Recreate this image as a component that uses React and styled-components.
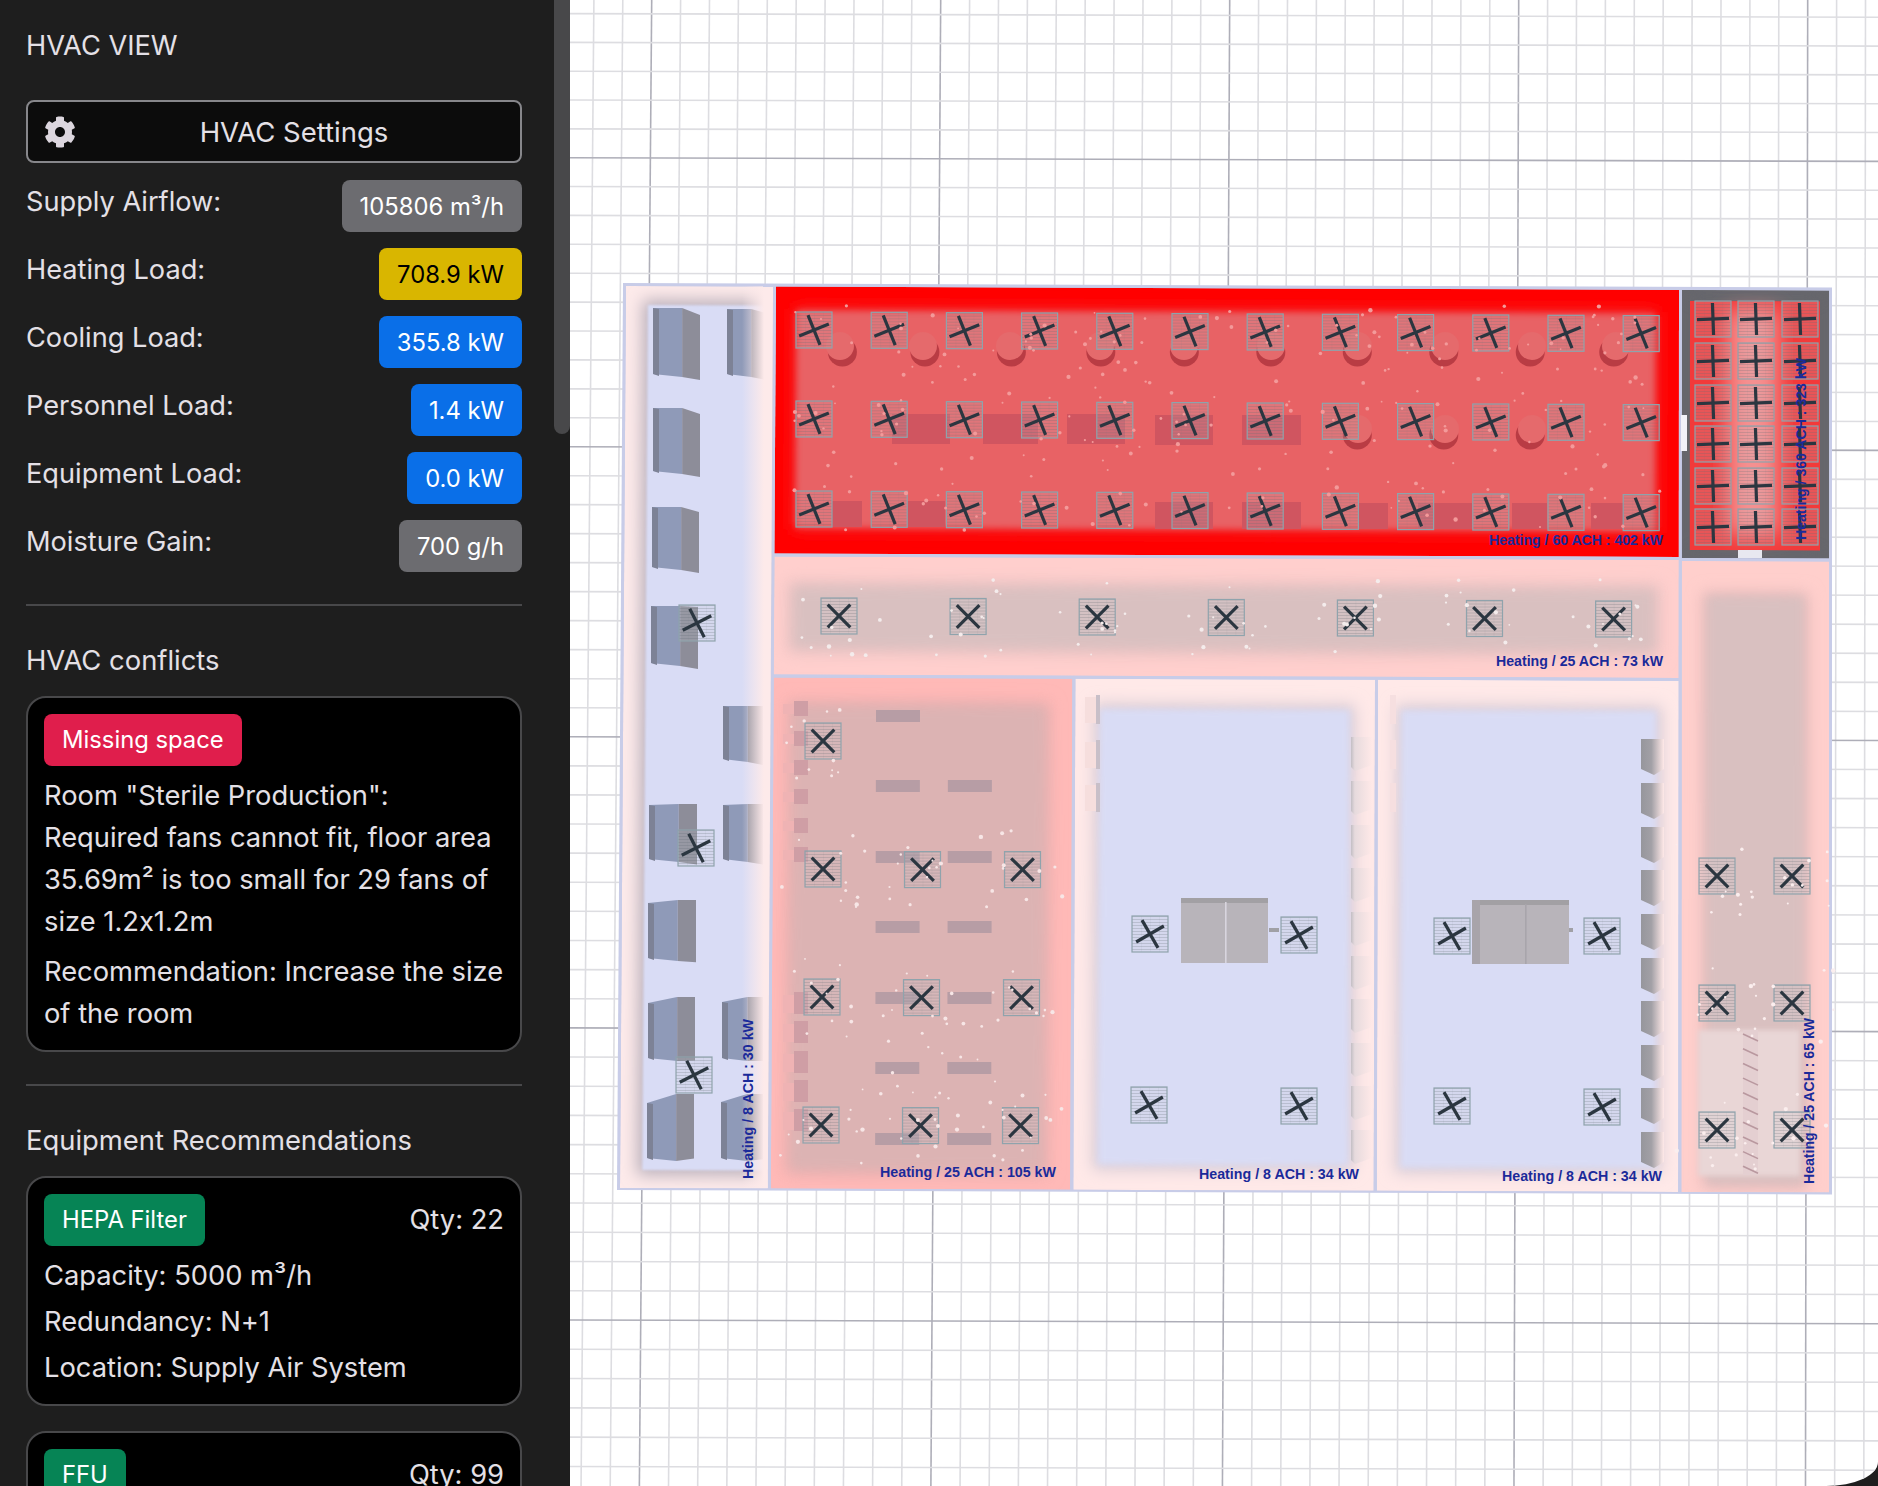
import React from 'react';
import styled, { createGlobalStyle } from 'styled-components';
import { FaCog } from 'react-icons/fa';

const GlobalStyle = createGlobalStyle`
  html, body, #root {
    margin: 0;
    height: 100%;
    background: #1e1e1e;
  }
`;

const Page = styled.div`
  display: flex;
  width: 100%;
  height: 100vh;
  overflow: hidden;
  font-family: Inter, 'Liberation Sans', sans-serif;
  font-feature-settings: 'calt' 0;
`;

const Sidebar = styled.aside`
  position: relative;
  flex: 0 0 570px;
  box-sizing: border-box;
  height: 100%;
  padding: 25px 48px 0 26px;
  overflow: hidden;
  background: #1e1e1e;
  color: #e4e0e6;
`;

const ScrollThumb = styled.div`
  position: absolute;
  top: 0;
  right: 0;
  width: 16px;
  height: 434px;
  border-radius: 0 0 8px 8px;
  background: #48484a;
`;

const Title = styled.div`
  font-size: 27.2px;
  line-height: 42px;
  margin-bottom: 33px;
`;

const SettingsButton = styled.button`
  display: flex;
  align-items: center;
  box-sizing: border-box;
  width: 100%;
  height: 63px;
  padding: 0 8px 0 16px;
  margin-bottom: 17px;
  border: 2px solid #87878b;
  border-radius: 8px;
  background: #0c0c0c;
  color: #e4e0e6;
  font: inherit;
  font-size: 27.5px;

  span {
    flex: 1;
    text-align: center;
  }
`;

const StatList = styled.div`
  display: flex;
  flex-direction: column;
  gap: 16px;
`;

const StatRow = styled.div`
  display: flex;
  justify-content: space-between;
  align-items: flex-start;
  height: 52px;
  font-size: 27.2px;
  line-height: 44px;
`;

const toneColors = {
  gray: ['#6c6c70', '#ffffff'],
  yellow: ['#d9b600', '#000000'],
  blue: ['#0a6fe8', '#ffffff'],
  red: ['#e01e4c', '#ffffff'],
  green: ['#068455', '#ffffff'],
};

const StatBadge = styled.div`
  box-sizing: border-box;
  height: 52px;
  padding: 0 18px;
  border-radius: 8px;
  background: ${(p) => toneColors[p.$tone][0]};
  color: ${(p) => toneColors[p.$tone][1]};
  font-size: 23.8px;
  line-height: 53px;
`;

const Divider = styled.hr`
  height: 2px;
  margin: 32px 0 33px;
  border: 0;
  background: #48484a;
`;

const Heading = styled.div`
  font-size: 27.4px;
  line-height: 42px;
  margin-bottom: 15px;
`;

const Card = styled.div`
  box-sizing: border-box;
  padding: 16px 16px 15px 16px;
  margin-bottom: 25px;
  border: 2px solid #48484a;
  border-radius: 20px;
  background: #000000;
  font-size: 27.3px;
  line-height: 42px;

  p {
    margin: 0 0 8px;
  }
  p:last-child {
    margin-bottom: 0;
  }
`;

const CardTop = styled.div`
  display: flex;
  justify-content: space-between;
  align-items: center;
  margin-bottom: 9px;
`;

const Tag = styled.div`
  height: 52px;
  padding: 0 18px;
  border-radius: 8px;
  background: ${(p) => toneColors[p.$tone][0]};
  color: #ffffff;
  font-size: 23.8px;
  line-height: 52px;
`;

const Spec = styled.div`
  margin-bottom: 4px;

  &:last-child {
    margin-bottom: 0;
  }
`;

const Canvas = styled.main`
  flex: 1;
  min-width: 0;
  height: 100%;
  overflow: hidden;
  background: #ffffff;
  border-bottom-right-radius: 52px 24px;

  svg {
    display: block;
    width: 100%;
    height: 100%;
  }
`;

const stats = [
  ['Supply Airflow:', '105806 m³/h', 'gray'],
  ['Heating Load:', '708.9 kW', 'yellow'],
  ['Cooling Load:', '355.8 kW', 'blue'],
  ['Personnel Load:', '1.4 kW', 'blue'],
  ['Equipment Load:', '0.0 kW', 'blue'],
  ['Moisture Gain:', '700 g/h', 'gray'],
];

// the floor plan is very slightly skewed, plan() maps flat plan coords to the screen
const plan = (u, v) => [
  u - 6 * (1 - (u - 623) / 1209) * ((v - 283) / 907),
  v + (4.5 * (u - 623)) / 1209,
];

const quad = ([u0, v0, u1, v1]) =>
  [[u0, v0], [u1, v0], [u1, v1], [u0, v1]]
    .map(([u, v]) => plan(u, v).map((n) => n.toFixed(1)).join(','))
    .join(' ');

const grow = ([u0, v0, u1, v1], d) => [u0 - d, v0 - d, u1 + d, v1 + d];

const range = (n) => Array.from({ length: n }, (_, i) => i);

const rooms = [
  { id: 'store', box: [626, 286, 773, 1188], outer: '#fdeaea', shade: '#b9b0bb', inner: '#d9dcf5', floor: [648, 305, 773, 1170], blur: 1, spread: 5 },
  { id: 'sterile', box: [776, 286, 1679, 553], outer: '#ff0000', shade: '#f32c2e', inner: '#e86265', floor: [797, 310, 1655, 527], blur: 3, spread: 2 },
  { id: 'clean', box: [1682, 286, 1829, 554], outer: '#66666c', shade: '#66666c', inner: '#f23a3a', floor: [1690, 297, 1820, 546], blur: 0.5, spread: 0 },
  { id: 'corridor', box: [776, 556, 1679, 674], outer: '#ffcfcd', shade: '#ecc4c4', inner: '#d9c0c0', floor: [795, 586, 1655, 647], blur: 6, spread: 6 },
  { id: 'east', box: [1682, 557, 1829, 1188], outer: '#ffcfcc', shade: '#e6bcbc', inner: '#d9c0c0', floor: [1707, 592, 1804, 1180], blur: 5, spread: 4 },
  { id: 'roomA', box: [776, 677, 1074, 1188], outer: '#ffb9b7', shade: '#eeb0b0', inner: '#dcb3b3', floor: [794, 704, 1048, 1170], blur: 6, spread: 4 },
  { id: 'roomB', box: [1077, 677, 1376, 1188], outer: '#ffe9e8', shade: '#d8ccd6', inner: '#d9dcf5', floor: [1101, 707, 1351, 1163], blur: 3, spread: 5 },
  { id: 'roomC', box: [1379, 677, 1679, 1188], outer: '#ffe9e8', shade: '#d8ccd6', inner: '#d9dcf5', floor: [1402, 707, 1657, 1165], blur: 3, spread: 5 },
];

const sterileFans = [330, 419, 509].flatMap((y) =>
  range(12).map((i) => ({ x: 814 + 75.2 * i, y: y + 0.33 * i, rot: -22 }))
);
const corridorFans = range(7).map((i) => ({ x: 839 + 129.1 * i, y: 616 + 0.5 * i, rot: 45 }));
const roomAFans = [
  { x: 823, y: 741, rot: 45 },
  ...[[869, 823], [997, 822], [1125, 821]].flatMap(([y, x]) =>
    [0, 99.5, 199.5].map((dx) => ({ x: x + dx, y: y + (dx > 0 ? 0.6 : 0), rot: 45 }))
  ),
];
const eastFans = [876, 1003, 1130].flatMap((y) => [
  { x: 1717, y, rot: 45 },
  { x: 1792, y, rot: 45 },
]);

const fans = [
  ...sterileFans,
  ...corridorFans,
  ...roomAFans,
  ...eastFans,
  { x: 697, y: 623, rot: -27 },
  { x: 696, y: 848, rot: -27 },
  { x: 694, y: 1075, rot: -27 },
  { x: 1150, y: 934, rot: -30 },
  { x: 1299, y: 935, rot: -30 },
  { x: 1149, y: 1105, rot: -30 },
  { x: 1299, y: 1106, rot: -30 },
  { x: 1452, y: 936, rot: -30 },
  { x: 1602, y: 936, rot: -30 },
  { x: 1452, y: 1106, rot: -30 },
  { x: 1602, y: 1107, rot: -30 },
  ...[319, 361, 403, 444, 486, 527].flatMap((y) =>
    [1713, 1756, 1800].map((x) => ({ x, y, rot: -2 }))
  ),
];

const moons = [
  ...[840, 923, 1010, 1100, 1184, 1271, 1358, 1445, 1532, 1616].map((x) => [x, 346]),
  ...[1358, 1445, 1532].map((x) => [x, 429]),
];

const redBlocks = [
  [892, 414, 58, 30], [983, 414, 55, 30], [1067, 414, 58, 30], [1155, 415, 58, 30], [1242, 415, 59, 30],
  [832, 501, 30, 26], [907, 501, 38, 26], [1155, 502, 58, 27], [1242, 502, 59, 27], [1358, 503, 30, 26],
  [1418, 503, 54, 26], [1512, 503, 35, 26], [1591, 503, 33, 26],
];

const storeBoxes = [
  [653, 308, 47, 72, 7], [653, 408, 47, 69, 6], [652, 507, 47, 66, 5], [651, 606, 47, 63, 1],
  [649, 804, 48, 61, -1], [648, 900, 48, 64, -3], [648, 997, 47, 67, -6], [647, 1094, 47, 70, -9],
  [727, 309, 39, 71, 4], [723, 706, 40, 59, 0], [723, 804, 40, 61, -1], [722, 997, 41, 67, -5], [721, 1094, 42, 70, -8],
];

const roomABars = [[710], [780, 1], [851, 1], [921, 1], [992, 1], [1062, 1], [1133, 1]];
const roomAStubs = [701, 731, 760, 789, 818, 847, 992, 1021, 1051, 1080, 1109];
const fins = [739, 783, 827, 870, 914, 958, 1001, 1045, 1088, 1132];

const labels = [
  { text: 'Heating / 60 ACH : 402 kW', x: 1489, y: 545, len: 174 },
  { text: 'Heating / 25 ACH : 73 kW', x: 1496, y: 666, len: 167 },
  { text: 'Heating / 25 ACH : 105 kW', x: 880, y: 1177, len: 176 },
  { text: 'Heating / 8 ACH : 34 kW', x: 1199, y: 1179, len: 160 },
  { text: 'Heating / 8 ACH : 34 kW', x: 1502, y: 1181, len: 160 },
  { text: 'Heating / 8 ACH : 30 kW', x: 753, y: 1179, len: 160, up: true },
  { text: 'Heating / 25 ACH : 65 kW', x: 1814, y: 1184, len: 166, up: true },
  { text: 'Heating / 360 ACH : 323 kW', x: 1806, y: 540, len: 182, up: true },
];

// small seeded generator so the particles stay put between renders
const seeded = (seed) => {
  let s = seed;
  return () => {
    s = (s * 16807) % 2147483647;
    return (s % 10000) / 10000;
  };
};

const scatter = (seed, n, [x0, y0, x1, y1], color) => {
  const next = seeded(seed);
  return range(n).map(() => ({
    x: x0 + next() * (x1 - x0),
    y: y0 + next() * (y1 - y0),
    r: 0.9 + next() * 1.3,
    color,
  }));
};

// particles gather round the fans in the rooms with a lot of air change
const aroundFans = (seed, list, perFan, color) =>
  list.flatMap((f, i) =>
    scatter(seed + i * 97, perFan, [f.x - 42, f.y - 40, f.x + 42, f.y + 40], color)
  );

const dots = [
  ...scatter(11, 230, [790, 305, 1660, 530], '#f39a9a'),
  ...aroundFans(23, corridorFans, 11, '#f4ecec'),
  ...aroundFans(37, roomAFans, 11, '#f7e6e6'),
  ...scatter(59, 14, [870, 1030, 1040, 1165], '#f7e6e6'),
  ...aroundFans(41, eastFans, 9, '#fbeeee'),
];

const Grid = () => {
  const lines = [];
  range(47).forEach((n) => {
    const i = n - 4;
    const x0 = 651.7 + 28.9 * i;
    const x1 = x0 + (-0.0083 + (x0 - 652) * 5.9e-6) * 1486;
    lines.push(
      <line key={`v${i}`} x1={x0} y1={0} x2={x1} y2={1486}
        stroke={i % 10 === 0 ? '#aeaeb8' : '#dddde1'} strokeWidth={1.6} />
    );
  });
  range(52).forEach((n) => {
    const i = n - 6;
    const y0 = 157.7 + 28.85 * i + 0.0052 * i * i;
    lines.push(
      <line key={`h${i}`} x1={570} y1={y0} x2={1878} y2={y0 + 3.7}
        stroke={i % 10 === 0 ? '#aeaeb8' : '#dddde1'} strokeWidth={1.6} />
    );
  });
  return <g>{lines}</g>;
};

const Room = ({ id, box, outer, shade, inner, floor, blur, spread }) => (
  <g clipPath={`url(#clip-${id})`}>
    <polygon points={quad(box)} fill={outer} />
    <polygon points={quad(grow(floor, spread))} fill={shade} filter="url(#soft)" />
    <polygon points={quad(floor)} fill={inner} style={{ filter: `blur(${blur}px)` }} />
  </g>
);

const Fan = ({ x, y, rot }) => (
  <g transform={`translate(${x.toFixed(1)} ${y.toFixed(1)})`}>
    <rect x={-18} y={-18} width={36} height={36} fill="url(#hatch)" stroke="#8fa3ac" strokeWidth={1.2} />
    <g transform={`rotate(${rot})`} stroke="#2b3640" strokeWidth={3.2}>
      <line x1={-16} y1={0} x2={16} y2={0} />
      <line x1={0} y1={-16} x2={0} y2={16} />
    </g>
  </g>
);

const StoreBox = ({ box: [x, y, w, h, s] }) => {
  const mid = x + w * 0.62;
  const r = x + w;
  const lift = s < 0 ? -s : 0;
  return (
    <g>
      <polygon points={`${x},${y + lift} ${mid},${y} ${mid},${y + h - 3} ${x},${y + h - 6}`} fill="#8f9ab8" />
      <polygon points={`${x},${y + lift} ${x + 6},${y + lift + 1} ${x + 6},${y + h - 4} ${x},${y + h - 6}`} fill="#7d8296" />
      <polygon points={`${mid},${y} ${r},${y + Math.max(s, 0)} ${r},${y + h + Math.min(s, 0) * 0.6} ${mid},${y + h - 3}`} fill="#8d8d99" />
    </g>
  );
};

const AirUnit = ({ x, y, w, h, split, side }) => (
  <g>
    <rect x={x} y={y} width={w} height={h} fill="#b8b4ba" />
    <rect x={x + (side ? 8 : 0)} y={y} width={w - (side ? 8 : 0)} height={5} fill="#a2a0a4" />
    {side && <rect x={x} y={y} width={8} height={h} fill="#a8a4aa" />}
    <rect x={split} y={y + 4} width={1.6} height={h - 4} fill={side ? '#a8a5ab' : '#d8d5de'} />
  </g>
);

const FloorPlan = () => (
  <svg viewBox="570 0 1308 1486" preserveAspectRatio="none">
    <defs>
      <filter id="soft" x="-20%" y="-20%" width="140%" height="140%">
        <feGaussianBlur stdDeviation="8" />
      </filter>
      <filter id="pale" x="-30%" y="-30%" width="160%" height="160%">
        <feGaussianBlur stdDeviation="10" />
      </filter>
      <filter id="hazy" x="-20%" y="-20%" width="140%" height="140%">
        <feGaussianBlur stdDeviation="2.5" />
      </filter>
      <pattern id="hatch" width="9" height="3" patternUnits="userSpaceOnUse">
        <rect width="9" height="3" fill="rgba(190,195,206,0.2)" />
        <rect width="9" height="0.9" fill="rgba(95,105,115,0.26)" />
        <rect width="0.6" height="3" fill="rgba(95,105,115,0.1)" />
      </pattern>
      <linearGradient id="storeFade" x1="0" x2="1" y1="0" y2="0">
        <stop offset="0" stopColor="#fdeaea" stopOpacity="0" />
        <stop offset="1" stopColor="#fdeaea" />
      </linearGradient>
      <linearGradient id="finFade" x1="0" x2="1" y1="0" y2="0">
        <stop offset="0" stopColor="#96969c" />
        <stop offset="0.45" stopColor="#a2a0a6" />
        <stop offset="1" stopColor="#ffe9e8" />
      </linearGradient>
      <linearGradient id="thinFin" x1="0" x2="1" y1="0" y2="0">
        <stop offset="0" stopColor="#c2bec4" />
        <stop offset="0.18" stopColor="#e6dadd" />
        <stop offset="1" stopColor="#ffe9e8" />
      </linearGradient>
      {rooms.map((r) => (
        <clipPath key={r.id} id={`clip-${r.id}`}>
          <polygon points={quad(r.box)} />
        </clipPath>
      ))}
    </defs>

    <Grid />
    <polygon points={quad([623, 283, 1832, 1190])} fill="#c8cce8" />
    {rooms.map((r) => <Room key={r.id} {...r} />)}

    {/* cleanroom centre glow, door gaps */}
    <g clipPath="url(#clip-clean)">
      <rect x={1728} y={310} width={50} height={225} fill="#f59090" filter="url(#pale)" />
    </g>
    <rect x={1738} y={550} width={24} height={8} fill="#e8e8f0" />
    <rect x={1681} y={415} width={6} height={36} fill="#f2f2f8" />

    {/* storage racks, the right hand ones fade into the wall */}
    {storeBoxes.map((b) => <StoreBox key={`${b[0]}-${b[1]}`} box={b} />)}
    <g clipPath="url(#clip-store)">
      <rect x={742} y={286} width={22} height={902} fill="url(#storeFade)" />
      <rect x={764} y={286} width={14} height={902} fill="#fdeaea" />
    </g>

    {/* sterile room */}
    {redBlocks.map(([x, y, w, h]) => (
      <rect key={`${x}-${y}`} x={x} y={y} width={w} height={h} fill="#d05560" />
    ))}
    {moons.map(([x, y]) => (
      <g key={`${x}-${y}`}>
        <circle cx={x + (1240 - x) * 0.006} cy={y + 6} r={14.5} fill="#b93c44" />
        <circle cx={x} cy={y} r={14} fill="#e56a6c" />
      </g>
    ))}

    {/* room A benches and wall stubs */}
    {roomABars.map(([y, both]) => (
      <g key={y} fill="#b79da5">
        <rect x={876 - (y - 710) * 0.002} y={y} width={44} height={12} />
        {both && <rect x={948 - (y - 710) * 0.002} y={y} width={44} height={12} />}
      </g>
    ))}
    {roomAStubs.map((y, i) => (
      <g key={y}>
        <rect x={783} y={y + 3} width={11} height={i > 5 ? 18 : 10} fill="#efb3b4" />
        <rect x={794} y={y} width={14} height={i > 5 ? 22 : 15} fill="#cf9ea5" />
      </g>
    ))}

    {/* room B and C */}
    <AirUnit x={1181} y={898} w={87} h={65} split={1225} />
    <rect x={1269} y={928} width={10} height={4} fill="#a0a0a6" />
    <AirUnit x={1472} y={900} w={97} h={64} split={1525} side />
    <rect x={1569} y={928} width={4} height={4} fill="#a0a0a6" />
    {[695, 740, 783].map((y) => (
      <g key={y}>
        <rect x={1085} y={y + 2} width={11} height={26} fill="#f6dedd" />
        <rect x={1096} y={y} width={4} height={29} fill="#c8bfc8" />
        <rect x={1390} y={y} width={6} height={29} fill="#f6dfe0" />
      </g>
    ))}
    {fins.map((y) => (
      <g key={y}>
        <polygon points={`1351,${y - 2} 1372,${y - 2} 1372,${y + 26} 1355,${y + 32} 1351,${y + 28}`} fill="url(#thinFin)" />
        <polygon points={`1641,${y} 1664,${y} 1664,${y + 30} 1654,${y + 36} 1641,${y + 30}`} fill="url(#finFade)" />
      </g>
    ))}

    {/* east stair */}
    <rect x={1698} y={1030} width={102} height={146} fill="#e9d6d6" filter="url(#hazy)" />
    <rect x={1743} y={1030} width={15} height={145} fill="#e4cfd1" />
    {range(10).map((i) => (
      <line key={i} x1={1743} y1={1034 + i * 14.7} x2={1758} y2={1041 + i * 14.7} stroke="#b9989f" strokeWidth={1.6} />
    ))}

    {fans.map((f, i) => <Fan key={i} {...f} />)}
    {dots.map((d, i) => (
      <circle key={i} cx={d.x.toFixed(1)} cy={d.y.toFixed(1)} r={d.r.toFixed(1)} fill={d.color} />
    ))}

    {labels.map((l) => (
      <text
        key={l.text + l.x}
        x={l.x}
        y={l.y}
        textLength={l.len}
        lengthAdjust="spacingAndGlyphs"
        transform={l.up ? `rotate(-90 ${l.x} ${l.y})` : undefined}
        fill="#1a2a9a"
        fontFamily="'Liberation Sans', Arial, sans-serif"
        fontWeight="700"
        fontSize="14.5"
      >
        {l.text}
      </text>
    ))}
  </svg>
);

export default function App() {
  return (
    <Page>
      <GlobalStyle />
      <Sidebar>
        <ScrollThumb />
        <Title>HVAC VIEW</Title>
        <SettingsButton>
          <FaCog size={32} color="#dcd6de" />
          <span>HVAC Settings</span>
        </SettingsButton>
        <StatList>
          {stats.map(([label, value, tone]) => (
            <StatRow key={label}>
              <span>{label}</span>
              <StatBadge $tone={tone}>{value}</StatBadge>
            </StatRow>
          ))}
        </StatList>
        <Divider />
        <Heading>HVAC conflicts</Heading>
        <Card>
          <CardTop>
            <Tag $tone="red">Missing space</Tag>
          </CardTop>
          <p>
            Room "Sterile Production":
            <br />
            Required fans cannot fit, floor area 35.69m² is too small for 29 fans of size 1.2x1.2m
          </p>
          <p>Recommendation: Increase the size of the room</p>
        </Card>
        <Divider />
        <Heading>Equipment Recommendations</Heading>
        <Card>
          <CardTop>
            <Tag $tone="green">HEPA Filter</Tag>
            <span>Qty: 22</span>
          </CardTop>
          <Spec>Capacity: 5000 m³/h</Spec>
          <Spec>Redundancy: N+1</Spec>
          <Spec>Location: Supply Air System</Spec>
        </Card>
        <Card>
          <CardTop>
            <Tag $tone="green">FFU</Tag>
            <span>Qty: 99</span>
          </CardTop>
        </Card>
      </Sidebar>
      <Canvas>
        <FloorPlan />
      </Canvas>
    </Page>
  );
}
